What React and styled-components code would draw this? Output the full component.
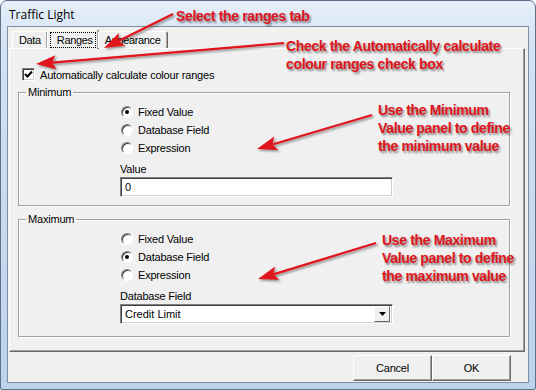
import styled, { createGlobalStyle } from "styled-components";

const GlobalStyle = createGlobalStyle`
  body {
    margin: 0;
    background: #ffffff;
  }
  * {
    box-sizing: border-box;
  }
`;

const App = () => {
  return (
    <>
      <GlobalStyle />
      <Window>
        <TitleBar>Traffic Light</TitleBar>
        <Client>
          <TabStrip>
            <Tab>Data</Tab>
            <Tab active>
              <Focus>Ranges</Focus>
            </Tab>
            <Tab>Appearance</Tab>
          </TabStrip>
          <TabPanel>
            <CheckRow>
              <CheckBox>
                <svg width="9" height="9" viewBox="0 0 9 9">
                  <path d="M1 4 L3.5 6.5 L8 1.5" stroke="#000" strokeWidth="2" fill="none" />
                </svg>
              </CheckBox>
              Automatically calculate colour ranges
            </CheckRow>

            <Group>
              <Legend>Minimum</Legend>
              <Options>
                <Radio checked label="Fixed Value" />
                <Radio label="Database Field" />
                <Radio label="Expression" />
                <FieldLabel>Value</FieldLabel>
                <TextBox>0</TextBox>
              </Options>
            </Group>

            <Group last>
              <Legend>Maximum</Legend>
              <Options>
                <Radio label="Fixed Value" />
                <Radio checked label="Database Field" />
                <Radio label="Expression" />
                <FieldLabel>Database Field</FieldLabel>
                <Combo>
                  <span>Credit Limit</span>
                  <DropButton>
                    <svg width="7" height="4" viewBox="0 0 7 4">
                      <path d="M0 0 H7 L3.5 4 Z" fill="#000" />
                    </svg>
                  </DropButton>
                </Combo>
              </Options>
            </Group>
          </TabPanel>
          <Footer>
            <Button>Cancel</Button>
            <Button>OK</Button>
          </Footer>
        </Client>

        <Arrows width="536" height="390" viewBox="0 0 536 390">
          <defs>
            <filter id="sh" x="-10%" y="-50%" width="120%" height="200%">
              <feDropShadow dx="1.5" dy="1.5" stdDeviation="1.2" floodColor="#000" floodOpacity="0.45" />
            </filter>
          </defs>
          <g filter="url(#sh)">
            <Arrow x1={173} y1={14} x2={104} y2={48} />
            <Arrow x1={284} y1={43} x2={36} y2={64} />
            <Arrow x1={372} y1={115} x2={257} y2={149} />
            <Arrow x1={376} y1={243} x2={258} y2={279} />
          </g>
        </Arrows>

        <Note top={7} left={176}>Select the ranges tab</Note>
        <Note top={37} left={286}>
          Check the Automatically calculate
          <br />
          colour ranges check box
        </Note>
        <Note top={101} left={378}>
          Use the Minimum
          <br />
          Value panel to define
          <br />
          the minimum value
        </Note>
        <Note top={231} left={382}>
          Use the Maximum
          <br />
          Value panel to define
          <br />
          the maximum value
        </Note>
      </Window>
    </>
  );
};

const Arrow = ({ x1, y1, x2, y2 }) => {
  const dx = x2 - x1;
  const dy = y2 - y1;
  const len = Math.sqrt(dx * dx + dy * dy);
  const ux = dx / len;
  const uy = dy / len;
  const head = 20;
  const half = 7;
  const bx = x2 - ux * head;
  const by = y2 - uy * head;
  const pts = [
    `${x2},${y2}`,
    `${bx - uy * half},${by + ux * half}`,
    `${bx + ux * 4},${by + uy * 4}`,
    `${bx + uy * half},${by - ux * half}`,
  ].join(" ");
  return (
    <>
      <line x1={x1} y1={y1} x2={bx + ux * 4} y2={by + uy * 4} stroke="#e0141c" strokeWidth="2.2" />
      <polygon points={pts} fill="#e0141c" />
    </>
  );
};

const Radio = ({ checked, label }) => (
  <RadioRow>
    <RadioDot checked={checked} />
    {label}
  </RadioRow>
);

const Window = styled.div`
  position: relative;
  width: 536px;
  height: 390px;
  display: flex;
  flex-direction: column;
  padding: 0 6px 6px 6px;
  border: 1px solid #5d7088;
  border-radius: 7px 7px 2px 2px;
  background: linear-gradient(180deg, #e6eff9 0%, #d3e2f3 12%, #c6d9ef 60%, #bcd3ec 100%);
  font-family: "Liberation Sans", Arial, sans-serif;
  font-size: 11px;
  color: #000;
  overflow: hidden;
`;

const TitleBar = styled.div`
  height: 25px;
  display: flex;
  align-items: center;
  padding-left: 2px;
  padding-top: 2px;
  font-family: "Open Sans", "Liberation Sans", sans-serif;
  font-size: 12px;
  color: #000;
`;

const Client = styled.div`
  flex: 1;
  display: flex;
  flex-direction: column;
  background: #f0f0f0;
  border: 1px solid #7f8fa3;
  padding: 2px 3px 1px 1px;
`;

const TabStrip = styled.div`
  display: flex;
  align-items: flex-end;
  height: 19px;
  padding-left: 3px;
  position: relative;
  z-index: 1;
`;

const Tab = styled.div`
  height: ${(p) => (p.active ? "20px" : "17px")};
  margin-bottom: ${(p) => (p.active ? "-1px" : "0")};
  margin-left: ${(p) => (p.active ? "-1px" : "0")};
  margin-right: ${(p) => (p.active ? "-1px" : "0")};
  padding: 0 ${(p) => (p.active ? "2px" : "6px")};
  display: flex;
  align-items: center;
  background: #f0f0f0;
  border-top: 1px solid #ffffff;
  border-left: 1px solid #ffffff;
  border-right: 1px solid #696969;
  box-shadow: inset -1px 0 #a0a0a0;
  border-radius: 2px 2px 0 0;
  letter-spacing: -0.35px;
`;

const Focus = styled.span`
  border: 1px dotted #000;
  padding: 1px 2px 1px 6px;
`;

const TabPanel = styled.div`
  flex: 1;
  display: flex;
  flex-direction: column;
  border-top: 1px solid #ffffff;
  border-left: 1px solid #ffffff;
  border-right: 1px solid #696969;
  border-bottom: 1px solid #696969;
  box-shadow: inset -1px -1px #a0a0a0;
  padding: 0 14px 14px 8px;
`;

const CheckRow = styled.label`
  display: flex;
  align-items: center;
  gap: 5px;
  margin: 19px 0 0 4px;
  height: 13px;
  letter-spacing: -0.2px;
`;

const CheckBox = styled.span`
  width: 13px;
  height: 13px;
  display: flex;
  align-items: center;
  justify-content: center;
  background: #fff;
  border: 1px solid;
  border-color: #808080 #ffffff #ffffff #808080;
  box-shadow: inset 1px 1px #404040, inset -1px -1px #d4d0c8;
`;

const Group = styled.fieldset`
  margin: ${(p) => (p.last ? "7px" : "5px")} 0 0 0;
  padding: 0 0 ${(p) => (p.last ? "9px" : "8px")} 0;
  border: 1px solid #a0a0a0;
  box-shadow: inset 1px 1px #ffffff, 1px 1px #ffffff;
  border-radius: 0;
  min-width: 0;
  flex: ${(p) => (p.last ? "1" : "none")};
`;

const Legend = styled.legend`
  margin-left: 7px;
  padding: 0 2px 0 2px;
  font-size: 11px;
  letter-spacing: -0.2px;
`;

const Options = styled.div`
  display: flex;
  flex-direction: column;
  width: 273px;
  margin-left: 101px;
  padding-top: 5px;
`;

const RadioRow = styled.div`
  display: flex;
  align-items: center;
  gap: 5px;
  height: 18px;
  padding-left: 1px;
  letter-spacing: -0.2px;
`;

const RadioDot = styled.span`
  width: 12px;
  height: 12px;
  border-radius: 50%;
  background: #fff;
  border: 1px solid;
  border-color: #808080 #ffffff #ffffff #808080;
  box-shadow: inset 1px 1px #404040;
  display: flex;
  align-items: center;
  justify-content: center;
  &::after {
    content: "";
    width: 4px;
    height: 4px;
    border-radius: 50%;
    background: ${(p) => (p.checked ? "#000" : "transparent")};
  }
`;

const FieldLabel = styled.div`
  margin-top: 6px;
  height: 14px;
  letter-spacing: -0.2px;
`;

const TextBox = styled.div`
  height: 20px;
  background: #fff;
  border: 1px solid;
  border-color: #808080 #ffffff #ffffff #808080;
  box-shadow: inset 1px 1px #404040, inset -1px -1px #d4d0c8;
  padding: 2px 4px;
  line-height: 14px;
`;

const Combo = styled(TextBox)`
  display: flex;
  justify-content: space-between;
  padding: 2px 2px 2px 4px;
`;

const DropButton = styled.span`
  width: 16px;
  height: 16px;
  margin-top: -1px;
  display: flex;
  align-items: center;
  justify-content: center;
  background: #f0f0f0;
  border: 1px solid;
  border-color: #ffffff #696969 #696969 #ffffff;
`;

const Footer = styled.div`
  display: flex;
  justify-content: flex-end;
  padding: 3px 14px 0 0;
`;

const Button = styled.div`
  width: 79px;
  height: 26px;
  display: flex;
  align-items: center;
  justify-content: center;
  background: #f0f0f0;
  border: 1px solid;
  border-color: #ffffff #696969 #696969 #ffffff;
  box-shadow: inset -1px -1px #a0a0a0;
  letter-spacing: -0.2px;
`;

const Arrows = styled.svg`
  position: absolute;
  left: -1px;
  top: -1px;
  z-index: 2;
  pointer-events: none;
`;

const Note = styled.div`
  position: absolute;
  z-index: 3;
  top: ${(p) => p.top - 1}px;
  left: ${(p) => p.left - 1}px;
  font-family: "Liberation Sans", Arial, sans-serif;
  font-weight: bold;
  font-size: 14px;
  line-height: 18px;
  letter-spacing: -0.35px;
  color: #e0141c;
  text-shadow: 1.5px 1.5px 2px rgba(0, 0, 0, 0.45);
  white-space: nowrap;
`;

export default App;
